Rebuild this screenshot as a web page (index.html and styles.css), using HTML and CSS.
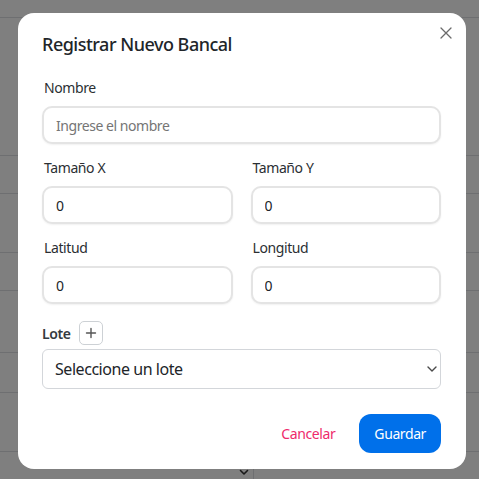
FILE: index.html
```html
<!DOCTYPE html>
<html lang="es">
<head>
<meta charset="utf-8">
<title>Registrar Nuevo Bancal</title>
<link rel="stylesheet" href="styles.css">
</head>
<body>
<div class="page">
  <div class="bg-row"></div>
  <div class="bg-row"></div>
  <div class="bg-row"></div>
  <div class="bg-row"></div>
  <div class="bg-row"></div>
  <div class="bg-row"></div>
  <div class="bg-row"></div>
  <div class="bg-row"></div>
  <div class="bg-row bg-last">
    <div class="bg-cell">
      <svg class="bg-chev" width="10" height="8" viewBox="0 0 10 8"><path d="M1.5 2.5 L5 6 L8.5 2.5" fill="none" stroke="#333" stroke-width="1.6" stroke-linecap="round" stroke-linejoin="round"/></svg>
    </div>
    <div class="bg-cell bg-cell-rest"></div>
  </div>
</div>

<div class="overlay">
  <div class="modal">
    <button class="close" type="button" aria-label="Cerrar">
      <svg width="12" height="12" viewBox="0 0 12 12"><path d="M1 1 L11 11 M11 1 L1 11" fill="none" stroke="#6b6b6b" stroke-width="1.3" stroke-linecap="round"/></svg>
    </button>
    <h2 class="title">Registrar Nuevo Bancal</h2>

    <div class="field">
      <label class="label">Nombre</label>
      <input class="input" type="text" placeholder="Ingrese el nombre">
    </div>

    <div class="grid2">
      <div class="field">
        <label class="label">Tamaño X</label>
        <input class="input" type="text" value="0">
      </div>
      <div class="field">
        <label class="label">Tamaño Y</label>
        <input class="input" type="text" value="0">
      </div>
    </div>

    <div class="grid2 grid-last">
      <div class="field">
        <label class="label">Latitud</label>
        <input class="input" type="text" value="0">
      </div>
      <div class="field">
        <label class="label">Longitud</label>
        <input class="input" type="text" value="0">
      </div>
    </div>

    <div class="lote-row">
      <span class="lote-label">Lote</span>
      <button class="plus" type="button" aria-label="Agregar lote">
        <svg width="12" height="12" viewBox="0 0 12 12"><path d="M6 1.5 V10.5 M1.5 6 H10.5" fill="none" stroke="#555" stroke-width="1.4" stroke-linecap="round"/></svg>
      </button>
    </div>
    <div class="select-wrap">
      <select class="select">
        <option>Seleccione un lote</option>
      </select>
      <svg class="select-chev" width="10" height="6" viewBox="0 0 10 6"><path d="M1 1 L5 5 L9 1" fill="none" stroke="#4a4a4a" stroke-width="1.4" stroke-linecap="round" stroke-linejoin="round"/></svg>
    </div>

    <div class="footer">
      <button class="btn-cancel" type="button">Cancelar</button>
      <button class="btn-save" type="button">Guardar</button>
    </div>
  </div>
</div>
</body>
</html>
```

FILE: styles.css
```css
* { box-sizing: border-box; }

html, body {
  margin: 0;
  padding: 0;
  width: 100%;
  height: 100%;
  overflow: hidden;
}

body {
  font-family: "Noto Sans", "Open Sans", sans-serif;
  color: #212529;
  background: #ffffff;
  letter-spacing: -0.4px;
}

/* underlying page (table rows) */
.page {
  height: 100vh;
  display: grid;
  grid-template-rows: 18px 138px 38px 59px 38px 62px 40px 59px 1fr;
  overflow: hidden;
}

.bg-row {
  border-bottom: 1px solid #dcdfe2;
}

.bg-last {
  border-bottom: none;
  display: flex;
}

.bg-cell {
  width: 254px;
  border-right: 1px solid #dcdfe2;
  display: flex;
  justify-content: flex-end;
  align-items: flex-start;
  padding: 16px 4px 0 0;
}

.bg-cell-rest {
  flex: 1;
  border-right: none;
}

/* modal overlay */
.overlay {
  position: fixed;
  inset: 0;
  background: rgba(0, 0, 0, 0.5);
  padding: 13px 0 0 18px;
  overflow: hidden;
}

.modal {
  position: relative;
  width: 448px;
  background: #ffffff;
  border-radius: 16px;
  padding: 16px 25px 16px 24px;
}

.close {
  position: absolute;
  top: 10px;
  right: 10px;
  width: 20px;
  height: 20px;
  padding: 0;
  border: none;
  background: transparent;
  display: flex;
  align-items: center;
  justify-content: center;
}

.title {
  margin: 0 0 19px;
  font-size: 18px;
  line-height: 30px;
  font-weight: 500;
  letter-spacing: -0.5px;
  color: #212529;
}

.field {
  display: flex;
  flex-direction: column;
  margin-bottom: 14px;
  min-width: 0;
}

.label {
  font-size: 14px;
  line-height: 20px;
  margin: 0 0 8px 2px;
  color: #2b2f33;
}

.input {
  height: 38px;
  border: 2px solid #e4e4e4;
  border-radius: 10px;
  padding: 0 12px;
  font-family: inherit;
  font-size: 14px;
  letter-spacing: -0.45px;
  color: #212529;
  background: #fff;
  box-shadow: 0 1px 2px rgba(0, 0, 0, 0.06);
  outline: none;
  width: 100%;
  min-width: 0;
}

.input::placeholder {
  color: #757575;
}

.grid2 {
  display: grid;
  grid-template-columns: minmax(0, 1fr) minmax(0, 1fr);
  column-gap: 18px;
}

.grid-last .field {
  margin-bottom: 17px;
}

.lote-row {
  display: flex;
  align-items: center;
  height: 24px;
  margin-bottom: 4px;
}

.lote-label {
  font-size: 14px;
  font-weight: 600;
  color: #343a40;
}

.plus {
  margin-left: 8px;
  width: 24px;
  height: 24px;
  padding: 0;
  border: 1px solid #cdd1d5;
  border-radius: 5px;
  background: #fff;
  display: flex;
  align-items: center;
  justify-content: center;
}

.select-wrap {
  display: grid;
  grid-template-columns: minmax(0, 1fr);
  align-items: center;
}

.select-wrap > * {
  grid-area: 1 / 1;
}

.select {
  appearance: none;
  -webkit-appearance: none;
  height: 40px;
  width: 100%;
  border: 1px solid #d3d6da;
  border-radius: 6px;
  padding: 0 30px 0 12px;
  font-family: inherit;
  font-size: 16px;
  letter-spacing: -0.45px;
  color: #212529;
  background: #fff;
  outline: none;
}

.select-chev {
  justify-self: end;
  margin-right: 4px;
  pointer-events: none;
}

.footer {
  margin-top: 25px;
  display: flex;
  justify-content: flex-end;
  align-items: center;
  gap: 24px;
}

.btn-cancel {
  border: none;
  background: transparent;
  padding: 0;
  font-family: inherit;
  font-size: 14px;
  letter-spacing: -0.4px;
  color: #ee2a6b;
}

.btn-save {
  height: 39px;
  padding: 0 15px;
  border: none;
  border-radius: 12px;
  background: #0070ea;
  color: #fff;
  font-family: inherit;
  font-size: 14px;
  letter-spacing: -0.4px;
}
```
